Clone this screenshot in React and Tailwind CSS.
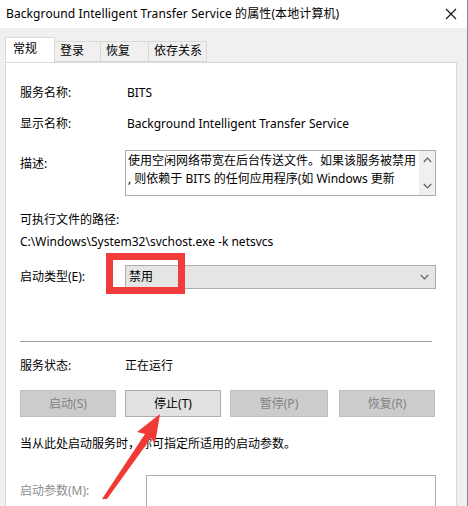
import React from "react";

const font = { fontFamily: '"Noto Sans", "Noto Sans CJK SC", sans-serif' };

const Tab = ({ label, active, w }) => (
  <div
    className={`${w} ${
      active
        ? "h-[25px] -mb-px pl-[7px] pt-[3px] bg-white border border-b-0 border-[#d9d9d9] text-black relative z-10"
        : "h-[21px] mt-[4px] pl-[5px] pt-[1px] bg-[#f0f0f0] border border-l-0 border-[#d9d9d9] text-black"
    }`}
  >
    {label}
  </div>
);

const Btn = ({ label, enabled, w }) => (
  <div
    className={`h-[27px] flex items-center justify-center border ${
      enabled
        ? "bg-[#e1e1e1] border-[#adadad] text-black"
        : "bg-[#cccccc] border-[#bfbfbf] text-[#838383]"
    } ${w}`}
  >
    {label}
  </div>
);

const Chevron = ({ up }) => (
  <svg width="9" height="6" viewBox="0 0 9 6" fill="none" stroke="#606060" strokeWidth="1.2">
    {up ? <path d="M0.8 5 L4.5 1.2 L8.2 5" /> : <path d="M0.8 1 L4.5 4.8 L8.2 1" />}
  </svg>
);

export default function App() {
  return (
    <div
      className="w-[468px] h-[506px] overflow-hidden relative bg-[#f0f0f0] text-[12px] leading-[16px] border-r border-[#7d8a99]"
      style={font}
    >
      {/* title bar */}
      <div className="h-[28px] bg-white flex items-center justify-between pl-[6px] pr-[10px]">
        <span className="text-black tracking-[0.1px]">Background Intelligent Transfer Service 的属性(本地计算机)</span>
        <svg width="12" height="12" viewBox="0 0 12 12" stroke="#111" strokeWidth="1.1">
          <path d="M1 1 L11 11 M11 1 L1 11" />
        </svg>
      </div>

      <div className="pl-[5px] pr-[10px] pt-[9px]">
        {/* tabs */}
        <div className="flex items-start">
          <Tab label="常规" active w="w-[50px]" />
          <Tab label="登录" w="w-[46px]" />
          <Tab label="恢复" w="w-[48px]" />
          <Tab label="依存关系" w="w-[58px]" />
        </div>

        {/* panel */}
        <div className="bg-white border border-[#d9d9d9] h-[460px] pl-[14px] pr-[20px] pt-[22px] text-black">
          <div className="flex h-[16px]">
            <div className="w-[107px]">服务名称:</div>
            <div>BITS</div>
          </div>
          <div className="flex h-[16px] mt-[15px]">
            <div className="w-[107px]">显示名称:</div>
            <div>Background Intelligent Transfer Service</div>
          </div>

          <div className="flex mt-[18px]">
            <div className="w-[105px] pt-[6px]">描述:</div>
            <div className="w-[311px] h-[46px] border border-[#abadb3] flex">
              <div className="flex-1 pl-[2px] pt-[1px] leading-[18px] overflow-hidden">
                <div className="whitespace-nowrap">使用空闲网络带宽在后台传送文件。如果该服务被禁用</div>
                <div className="whitespace-nowrap">, 则依赖于 BITS 的任何应用程序(如 Windows 更新</div>
              </div>
              <div className="w-[16px] bg-[#f0f0f0] flex flex-col items-center justify-between py-[6px]">
                <Chevron up />
                <Chevron />
              </div>
            </div>
          </div>

          <div className="h-[16px] mt-[16px]">可执行文件的路径:</div>
          <div className="h-[16px] mt-[6px]">C:\Windows\System32\svchost.exe -k netsvcs</div>

          <div className="flex items-center mt-[15px]">
            <div className="w-[105px]">启动类型(E):</div>
            <div className="w-[311px] h-[24px] bg-[#e5e5e5] border border-[#adadad] flex items-center justify-between pl-[3px] pr-[6px]">
              <span>禁用</span>
              <Chevron />
            </div>
          </div>

          <div className="h-px bg-[#a0a0a0] mt-[52px] mr-[4px]" />

          <div className="flex h-[16px] mt-[16px]">
            <div className="w-[105px]">服务状态:</div>
            <div>正在运行</div>
          </div>

          <div className="flex mt-[16px]">
            <Btn label="启动(S)" w="w-[96px]" />
            <div className="w-[9px]" />
            <Btn label="停止(T)" enabled w="w-[96px]" />
            <div className="w-[9px]" />
            <Btn label="暂停(P)" w="w-[98px]" />
            <div className="w-[11px]" />
            <Btn label="恢复(R)" w="w-[96px]" />
          </div>

          <div className="h-[16px] mt-[19px]">当从此处启动服务时，你可指定所适用的启动参数。</div>

          <div className="flex items-start mt-[23px]">
            <div className="w-[126px] text-[#8d8d8d] pt-[8px]">启动参数(M):</div>
            <div className="w-[290px] h-[40px] border border-[#abadb3] bg-white" />
          </div>
        </div>
      </div>

      {/* annotation: red box */}
      <div className="absolute left-[106px] top-[253px] w-[79px] h-[41px] border-[7px] border-[#f23b3b]" />

      {/* annotation: red arrow */}
      <svg className="absolute left-0 top-0" width="468" height="506" viewBox="0 0 468 506">
        <polygon
          points="160,414 137,432 145,434 102,499 107,499 151,438 155,444"
          fill="#f03a35"
        />
      </svg>
    </div>
  );
}
